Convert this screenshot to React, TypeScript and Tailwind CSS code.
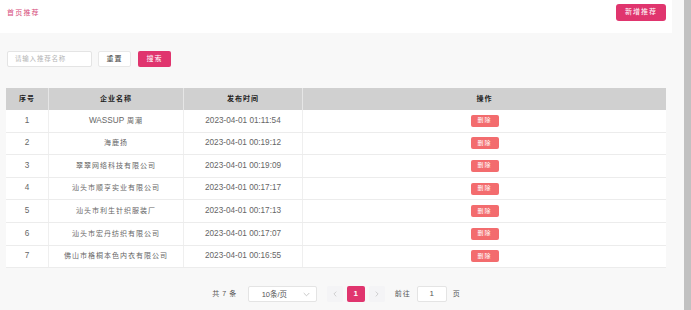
import React from "react";

const rows: [string, React.ReactNode, string][] = [
  ["1", <><span className="text-[8.2px] tracking-normal">WASSUP</span> 周潮</>, "2023-04-01 01:11:54"],
  ["2", "海鹿扬", "2023-04-01 00:19:12"],
  ["3", "翠翠网络科技有限公司", "2023-04-01 00:19:09"],
  ["4", "汕头市顺亨实业有限公司", "2023-04-01 00:17:17"],
  ["5", "汕头市利生针织服装厂", "2023-04-01 00:17:13"],
  ["6", "汕头市宏丹纺织有限公司", "2023-04-01 00:17:07"],
  ["7", "佛山市格桐本色内衣有限公司", "2023-04-01 00:16:55"],
];

const font = { fontFamily: '"Liberation Sans", "Noto Sans CJK SC", sans-serif' };

export default function App() {
  return (
    <div className="flex w-[691px] h-[310px] overflow-hidden" style={font}>
      <div className="w-[684px] h-full bg-[#f8f8f8] flex flex-col">
        {/* top card */}
        <div className="w-[672px] h-[33px] bg-white flex items-start justify-between pt-[4px] pl-[7px] pr-[6px]">
          <div className="h-[17px] leading-[17px] text-[7px] tracking-[1.2px] text-[#d64b7a]">首页推荐</div>
          <div className="w-[50px] h-[17px] rounded-[3px] bg-[#e0356e] text-white text-[7px] tracking-[1px] flex items-center justify-center">
            新增推荐
          </div>
        </div>

        {/* search row */}
        <div className="flex items-center mt-[18px] ml-[7px] h-[16px]">
          <div className="w-[85px] h-[16px] bg-white border border-[#e4e4e4] rounded-[2px] flex items-center pl-[7px] text-[6.5px] tracking-[0.8px] text-[#b5b5b5]">
            请输入推荐名称
          </div>
          <div className="ml-[6px] w-[33px] h-[16px] bg-white border border-[#e8e8e8] rounded-[2px] flex items-center justify-center text-[7px] tracking-[1px] text-[#444]">
            重置
          </div>
          <div className="ml-[7px] w-[33px] h-[16px] bg-[#e0356e] rounded-[2px] flex items-center justify-center text-[7px] tracking-[1px] text-white">
            搜索
          </div>
        </div>

        {/* table */}
        <div className="mt-[21px] ml-[6px] w-[660px] bg-white">
          <div className="grid grid-cols-[43px_135px_119px_363px] h-[22px] bg-[#d0d0d0] text-[7px] font-bold text-[#222] tracking-[1px]">
            <div className="flex items-center justify-center border-r border-[#e6e6e6]">序号</div>
            <div className="flex items-center justify-center border-r border-[#e6e6e6]">企业名称</div>
            <div className="flex items-center justify-center border-r border-[#e6e6e6]">发布时间</div>
            <div className="flex items-center justify-center">操作</div>
          </div>
          {rows.map((r) => (
            <div
              key={r[0]}
              className="grid grid-cols-[43px_135px_119px_363px] h-[22.6px] border-b border-[#ececec] text-[#666]"
            >
              <div className="flex items-center justify-center border-r border-[#efefef] text-[8.2px]">{r[0]}</div>
              <div className="flex items-center justify-center border-r border-[#efefef] text-[7px] tracking-[1px] whitespace-pre">{r[1]}</div>
              <div className="flex items-center justify-center border-r border-[#efefef] text-[8.2px]">{r[2]}</div>
              <div className="flex items-center justify-center">
                <div className="w-[28px] h-[12px] rounded-[2px] bg-[#f36c6e] text-white text-[6px] tracking-[1px] flex items-center justify-center">
                  删除
                </div>
              </div>
            </div>
          ))}
        </div>

        {/* pagination */}
        <div className="mt-[18px] ml-[6px] w-[660px] h-[16px] flex items-center justify-center text-[#555]">
          <div className="text-[7px] tracking-[0.5px]">共 7 条</div>
          <div className="ml-[11px] w-[69px] h-[16px] bg-white border border-[#e4e4e4] rounded-[2px] flex items-center relative">
            <span className="absolute left-[13px] text-[7.5px] text-[#555]">10条/页</span>
            <svg className="absolute right-[6px]" width="7" height="5" viewBox="0 0 7 5">
              <path d="M0.7 1 L3.5 3.8 L6.3 1" fill="none" stroke="#bbb" strokeWidth="0.8" />
            </svg>
          </div>
          <div className="ml-[10px] w-[16px] h-[16px] bg-[#f4f4f6] rounded-[2px] flex items-center justify-center">
            <svg width="4" height="6" viewBox="0 0 4 6">
              <path d="M3.3 0.6 L0.9 3 L3.3 5.4" fill="none" stroke="#c0c0c0" strokeWidth="0.7" />
            </svg>
          </div>
          <div className="ml-[4px] w-[18px] h-[16px] bg-[#e0356e] rounded-[2px] flex items-center justify-center text-white text-[8px] font-bold">
            1
          </div>
          <div className="ml-[4px] w-[16px] h-[16px] bg-[#f4f4f6] rounded-[2px] flex items-center justify-center">
            <svg width="4" height="6" viewBox="0 0 4 6">
              <path d="M0.7 0.6 L3.1 3 L0.7 5.4" fill="none" stroke="#c0c0c0" strokeWidth="0.7" />
            </svg>
          </div>
          <div className="ml-[10px] text-[7px] tracking-[1px]">前往</div>
          <div className="ml-[6px] w-[30px] h-[16px] bg-white border border-[#e4e4e4] rounded-[2px] flex items-center justify-center text-[8px]">
            1
          </div>
          <div className="ml-[6px] text-[7px]">页</div>
        </div>
      </div>
      <div className="w-[7px] h-full bg-[#c1c1c1]" />
    </div>
  );
}
